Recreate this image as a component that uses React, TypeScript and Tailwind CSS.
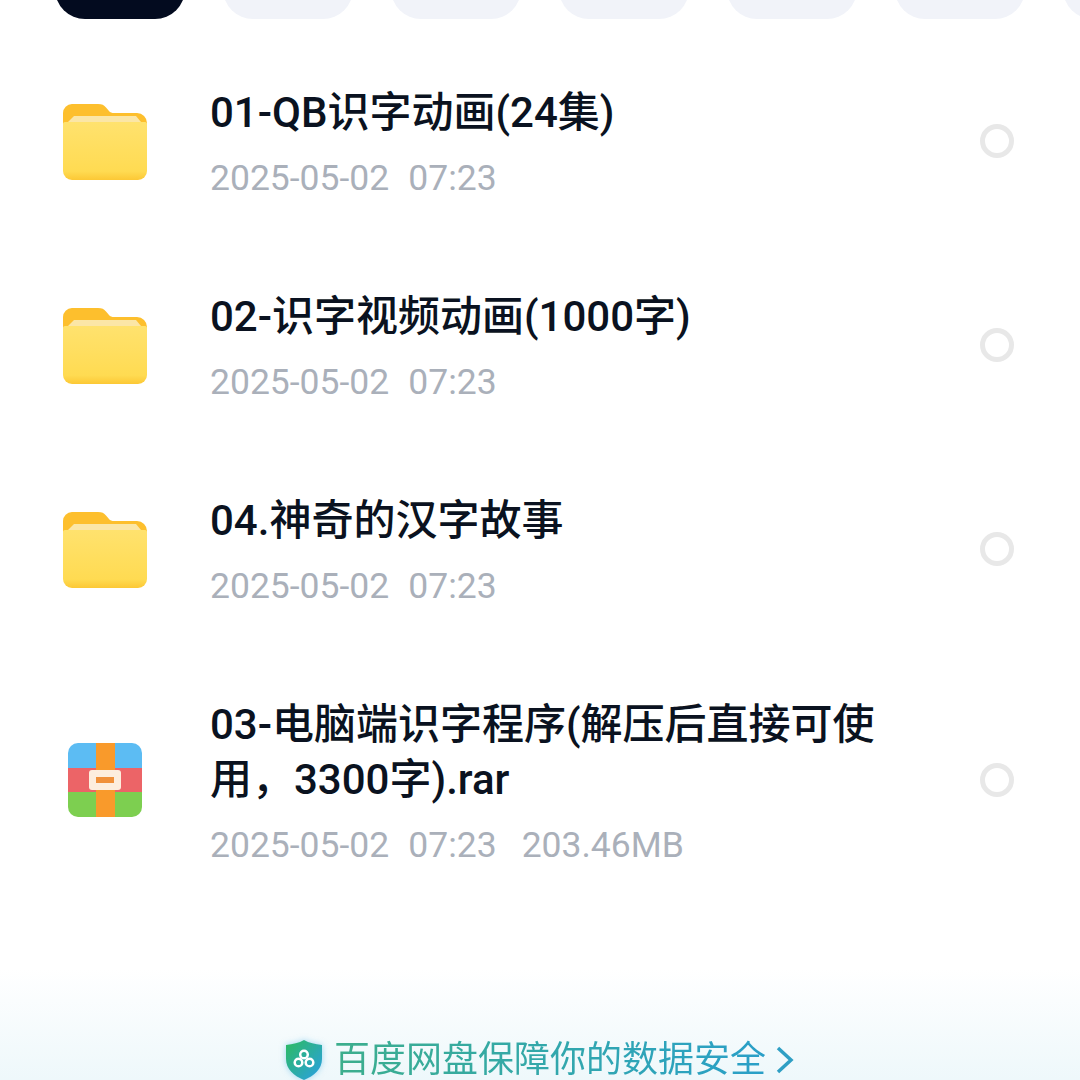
const files = [
  { name: "01-QB识字动画(24集)", kind: "folder", size: "" },
  { name: "02-识字视频动画(1000字)", kind: "folder", size: "" },
  { name: "04.神奇的汉字故事", kind: "folder", size: "" },
  { name: "03-电脑端识字程序(解压后直接可使用，3300字).rar", kind: "rar", size: "203.46MB" },
];

const tabCount = 7;

function FolderIcon() {
  return (
    <svg width="84" height="76" viewBox="0 0 84 76">
      <defs>
        <linearGradient id="folderFront" x1="0" y1="0" x2="0" y2="1">
          <stop offset="0" stopColor="#ffe26e" />
          <stop offset="0.85" stopColor="#ffdb52" />
          <stop offset="1" stopColor="#fcc835" />
        </linearGradient>
      </defs>
      <path d="M0 9a9 9 0 0 1 9-9h26c4 0 6 1 8 3.500l3 3.500c1 1.500 3 2 5 2h23a10 10 0 0 1 10 10v14H0z" fill="#fdbf2d" />
      <path d="M11 12h62l5 6H5z" fill="#fbe6a6" />
      <path d="M0 20c0-1.500 1-2 3-2h78c2 0 3 .5 3 2v47a9 9 0 0 1-9 9H9a9 9 0 0 1-9-9z" fill="url(#folderFront)" />
    </svg>
  );
}

function RarIcon() {
  return (
    <div className="relative mb-[2px] grid h-[74px] w-[74px] grid-rows-3 overflow-hidden rounded-[10px]">
      <div className="bg-[#5cbcf3]" />
      <div className="bg-[#ec6467]" />
      <div className="bg-[#7dcf50]" />
      <div className="absolute inset-y-0 left-[28px] w-[19px] bg-[#f99a2b]" />
      <div className="absolute left-[21px] top-[27px] flex h-[20px] w-[32px] items-center justify-center rounded-[3px] bg-[#fdeedd]">
        <div className="h-[6px] w-[18px] bg-[#f0913a]" />
      </div>
    </div>
  );
}

function ShieldIcon() {
  return (
    <svg className="drop-shadow-[0_0_3px_rgba(70,180,230,0.5)]" width="38" height="40" viewBox="0 0 38 40">
      <defs>
        <linearGradient id="shield" x1="0" y1="0" x2="1" y2="1">
          <stop offset="0" stopColor="#2dbb5f" />
          <stop offset="1" stopColor="#2a9fe6" />
        </linearGradient>
      </defs>
      <path d="M19 0c5 3 11 4 18 5v14c0 10-8 17-18 21C9 36 1 29 1 19V5c7-1 13-2 18-5z" fill="url(#shield)" />
      <g fill="none" stroke="#fff" strokeWidth="2.500">
        <circle cx="19" cy="14.500" r="3.800" />
        <circle cx="13.500" cy="22.500" r="3.800" />
        <circle cx="24.500" cy="22.500" r="3.800" />
      </g>
    </svg>
  );
}

export default function App() {
  return (
    <div
      className="flex h-[1080px] w-[1080px] flex-col overflow-hidden bg-white"
      style={{ fontFamily: 'Roboto, "Noto Sans CJK SC", sans-serif' }}
    >
      {/* filter pills, scrolled mostly out of view */}
      <div className="mt-[-51px] flex shrink-0 gap-[38px] pl-[55px]">
        {Array.from({ length: tabCount }, (_, i) => (
          <div
            key={i}
            className={`h-[70px] w-[130px] shrink-0 rounded-[30px] ${i === 0 ? "bg-[#030b1f]" : "bg-[#f1f3f9]"}`}
          />
        ))}
      </div>

      <div className="flex flex-col pt-[20px]">
        {files.map((f) => (
          <div key={f.name} className="flex items-center pb-[45px] pl-[63px] pr-[66px] pt-[46px]">
            <div className="flex w-[147px] shrink-0 items-center">
              {f.kind === "folder" ? <FolderIcon /> : <div className="pl-[5px]"><RarIcon /></div>}
            </div>
            <div className="min-w-0 flex-1">
              <div className="w-[680px] text-[42px] font-medium leading-[55px] text-[#0a1220]">{f.name}</div>
              <div className="mt-[19px] text-[35.5px] leading-[39px] text-[#aab0ba]">
                <span>2025-05-02</span>
                <span className="ml-[19px]">07:23</span>
                {f.size && <span className="ml-[25px]">{f.size}</span>}
              </div>
            </div>
            <div className="mb-[2px] h-[34px] w-[34px] shrink-0 rounded-full border-[5px] border-[#e8e8e8]" />
          </div>
        ))}
      </div>

      {/* security notice */}
      <div className="mt-auto flex h-[112px] items-end justify-center bg-gradient-to-b from-white to-[#eef8fb]">
        <div className="mb-[-2px] flex h-[44px] items-center">
          <ShieldIcon />
          <span className="ml-[11px] bg-gradient-to-r from-[#3dae8c] to-[#2a9fc8] bg-clip-text text-[36px] leading-[44px] text-transparent">
            百度网盘保障你的数据安全
          </span>
          <svg className="ml-[9px]" width="20" height="30" viewBox="0 0 20 30" fill="none" stroke="#2f9fc4" strokeWidth="3.500">
            <path d="M3 3l13 12L3 27" />
          </svg>
        </div>
      </div>
    </div>
  );
}
